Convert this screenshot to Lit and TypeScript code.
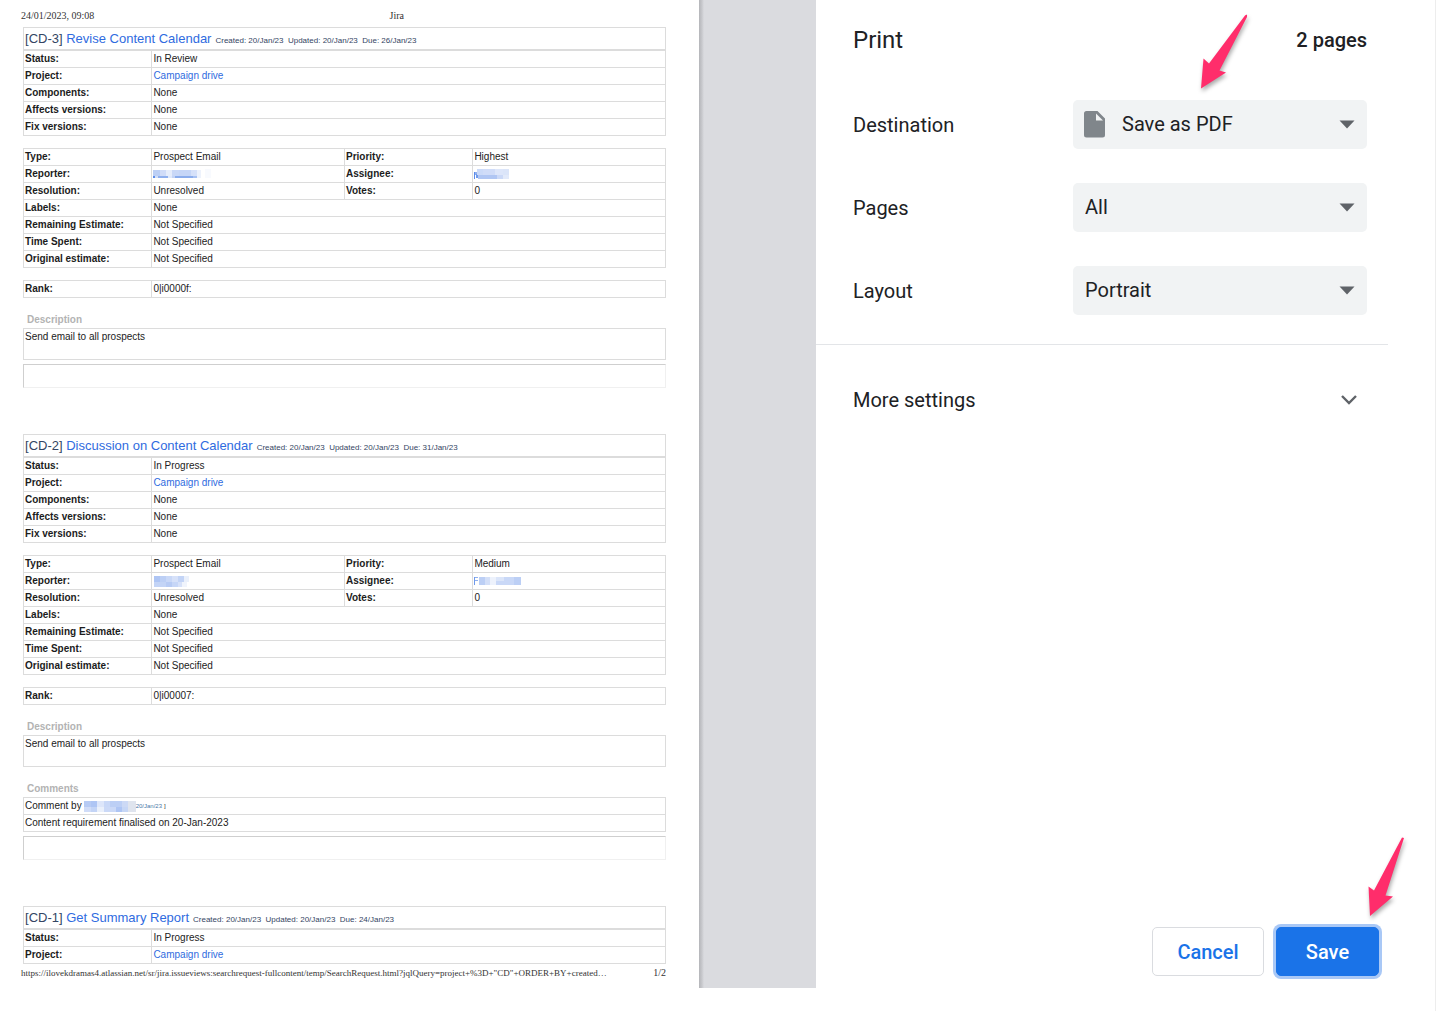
import { LitElement, html, css, svg, nothing } from "lit";
import { customElement } from "lit/decorators.js";

type Block = [x: number, y: number, w: number, h: number, fill: string];

interface Mask {
  label: string;
  width: number;
  blocks: Block[];
}

interface Issue {
  key: string;
  title: string;
  due: string;
  status: string;
  type?: string;
  priority?: string;
  reporter?: Mask;
  assignee?: Mask;
  rank?: string;
  description?: string;
  comment?: { author: Mask; date: string; text: string };
}

const issues: Issue[] = [
  {
    key: "CD-3",
    title: "Revise Content Calendar",
    due: "26/Jan/23",
    status: "In Review",
    type: "Prospect Email",
    priority: "Highest",
    reporter: {
      label: "Reporter",
      width: 58,
      blocks: [
        [0, 1, 7, 6, "#bccff5"], [7, 1, 6, 6, "#d0dcf8"], [13, 1, 6, 6, "#e6edfb"], [19, 1, 7, 6, "#c9d8f7"],
        [26, 1, 12, 6, "#c6d6f7"], [38, 1, 6, 6, "#d6e1f9"], [44, 1, 4, 8, "#edf2fc"], [52, 0, 6, 9, "#f8fafe"],
        [0, 7, 2, 2, "#5c8cea"], [2, 7, 3, 2, "#d3dff7"], [5, 7, 10, 2, "#8fb0ee"], [15, 7, 4, 2, "#e0e9fa"],
        [19, 7, 3, 2, "#c3d4f6"], [22, 7, 18, 2, "#8badec"], [40, 7, 4, 2, "#a8c2f2"],
      ],
    },
    assignee: {
      label: "Assignee",
      width: 36,
      blocks: [
        [0, 3, 1, 7, "#5c8cea"], [1, 3, 2, 3, "#8fb0ee"], [2, 5, 2, 4, "#6f9aec"],
        [3, 0, 6, 6, "#cbdaf8"], [9, 0, 12, 6, "#d0dcf8"], [21, 0, 8, 6, "#dde6fa"], [29, 0, 6, 6, "#dbe5f9"],
        [4, 6, 19, 4, "#b0c6f3"], [23, 6, 6, 4, "#cbd9f7"], [29, 6, 6, 4, "#e2eafa"],
      ],
    },
    rank: "0|i0000f:",
    description: "Send email to all prospects",
  },
  {
    key: "CD-2",
    title: "Discussion on Content Calendar",
    due: "31/Jan/23",
    status: "In Progress",
    type: "Prospect Email",
    priority: "Medium",
    reporter: {
      label: "Reporter",
      width: 36,
      blocks: [
        [1, 0, 6, 6, "#aec5f4"], [7, 0, 6, 6, "#bccff5"], [13, 0, 6, 6, "#c9d8f7"], [19, 0, 6, 6, "#d6e1f9"], [25, 0, 6, 6, "#c3d4f6"], [31, 0, 5, 6, "#eaf0fb"],
        [1, 6, 12, 5, "#c3d4f6"], [13, 6, 6, 5, "#b7cbf4"], [19, 6, 6, 5, "#c6d6f7"], [25, 6, 4, 5, "#d6e1f9"], [29, 6, 5, 5, "#f0f4fc"],
      ],
    },
    assignee: {
      label: "Assignee",
      width: 48,
      blocks: [
        [0, 1, 1, 8, "#6f9aec"], [1, 1, 3, 1, "#8fb0ee"], [1, 4, 3, 1, "#8fb0ee"],
        [5, 1, 6, 8, "#bccff5"], [11, 1, 5, 8, "#d3dff8"], [16, 1, 6, 8, "#edf2fc"], [22, 1, 8, 4, "#dbe5f9"],
        [22, 5, 8, 4, "#c9d8f7"], [30, 1, 10, 8, "#c9d8f7"], [40, 1, 7, 8, "#bccff5"],
      ],
    },
    rank: "0|i00007:",
    description: "Send email to all prospects",
    comment: {
      author: {
        label: "Author",
        width: 52,
        blocks: [
          [0, 0, 7, 6, "#b7cbf4"], [7, 0, 6, 6, "#aec5f4"], [13, 0, 7, 6, "#dde6fa"], [20, 0, 6, 6, "#c9d8f7"],
          [26, 0, 12, 6, "#bccff5"], [38, 0, 6, 6, "#ccd9f5"], [44, 0, 8, 11, "#dfe4ee"],
          [0, 6, 7, 5, "#d0dcf8"], [7, 6, 6, 5, "#c3d4f6"], [13, 6, 7, 5, "#eaf0fb"], [20, 6, 12, 5, "#cbd9f7"],
          [32, 6, 6, 5, "#aec5f4"], [38, 6, 6, 5, "#c6d6f5"],
        ],
      },
      date: "20/Jan/23",
      text: "Content requirement finalised on 20-Jan-2023",
    },
  },
  { key: "CD-1", title: "Get Summary Report", due: "24/Jan/23", status: "In Progress" },
];

const mask = (m: Mask) => html`<svg class="mask" role="img" aria-label=${m.label} width=${m.width} height="11" viewBox="0 0 ${m.width} 11" shape-rendering="crispEdges">
  ${m.blocks.map(([x, y, w, h, fill]) => svg`<rect x=${x} y=${y} width=${w} height=${h} fill=${fill}></rect>`)}
</svg>`;

@customElement("jira-issue")
class JiraIssue extends LitElement {
  static properties = { issue: { attribute: false } };
  declare issue: Issue;

  static styles = css`
    :host {
      display: block;
      color: #222;
      font: 10px/12px "Liberation Sans", Arial, sans-serif;
    }
    table {
      width: 100%;
      border-collapse: collapse;
      table-layout: fixed;
      border: 1px solid #dcdcdc;
    }
    th, td {
      box-sizing: border-box;
      height: 17px;
      padding: 2px 1px;
      border: 1px solid #dcdcdc;
      text-align: left;
      vertical-align: middle;
    }
    th { width: 20%; color: #1c1c1c; }
    a { color: #2f6be0; text-decoration: none; }
    .heading {
      box-sizing: border-box;
      display: flex;
      align-items: baseline;
      gap: 4px;
      margin: 0;
      height: 23px;
      padding: 3px 1px;
      border: 1px solid #dcdcdc;
      font-size: 13px;
      line-height: 16px;
      font-weight: 400;
      color: #344563;
    }
    .dates { font-size: 8px; white-space: pre; }
    .block { margin-top: 12px; }
    .mask { display: block; }
    .label {
      margin: 15px 0 2px 4px;
      font-size: 10px;
      line-height: 13px;
      font-weight: 700;
      color: #b3b3b3;
    }
    .text { height: 31px; vertical-align: top; }
    .author { display: flex; align-items: center; }
    .author .mask { margin-left: 2px; }
    .stamp { font-size: 6px; color: #4a78a8; }
    .bracket { margin-left: 2px; font-size: 6px; }
    .end {
      height: 24px;
      margin-top: 4px;
      border: 1px solid #f0f0f0;
      border-top-color: #cfcfcf;
      border-left-color: #cfcfcf;
      box-sizing: border-box;
    }
  `;

  render() {
    const i = this.issue;
    return html`
      <h2 class="heading">
        <span>[${i.key}] <a href="#${i.key}">${i.title}</a></span>
        <span class="dates">Created: 20/Jan/23  Updated: 20/Jan/23  Due: ${i.due}</span>
      </h2>
      <table>
        <tr><th scope="row">Status:</th><td>${i.status}</td></tr>
        <tr><th scope="row">Project:</th><td><a href="#project">Campaign drive</a></td></tr>
        ${i.type
          ? ["Components:", "Affects versions:", "Fix versions:"].map(
              (name) => html`<tr><th scope="row">${name}</th><td>None</td></tr>`)
          : nothing}
      </table>
      ${i.type ? this.details(i) : nothing}
    `;
  }

  private details(i: Issue) {
    const rest = [
      ["Labels:", "None"],
      ["Remaining Estimate:", "Not Specified"],
      ["Time Spent:", "Not Specified"],
      ["Original estimate:", "Not Specified"],
    ];
    return html`
      <table class="block">
        <colgroup><col style="width:20%"><col style="width:30%"><col style="width:20%"><col style="width:30%"></colgroup>
        <tr><th scope="row">Type:</th><td>${i.type}</td><th scope="row">Priority:</th><td>${i.priority}</td></tr>
        <tr><th scope="row">Reporter:</th><td>${mask(i.reporter!)}</td><th scope="row">Assignee:</th><td>${mask(i.assignee!)}</td></tr>
        <tr><th scope="row">Resolution:</th><td>Unresolved</td><th scope="row">Votes:</th><td>0</td></tr>
        ${rest.map(([name, value]) => html`<tr><th scope="row">${name}</th><td colspan="3">${value}</td></tr>`)}
      </table>
      <table class="block"><tr><th scope="row">Rank:</th><td>${i.rank}</td></tr></table>
      <h3 class="label">Description</h3>
      <table><tr><td class="text">${i.description}</td></tr></table>
      ${i.comment
        ? html`<h3 class="label">Comments</h3>
            <table>
              <tr><td><div class="author">Comment by ${mask(i.comment.author)}<span class="stamp">${i.comment.date}</span><span class="bracket">]</span></div></td></tr>
              <tr><td>${i.comment.text}</td></tr>
            </table>`
        : nothing}
      <div class="end"></div>
    `;
  }
}

@customElement("app-root")
class AppRoot extends LitElement {
  static styles = css`
    :host {
      display: block;
      background: #fff;
      color: #202124;
      font-family: Roboto, "Liberation Sans", sans-serif;
    }
    .dialog {
      box-sizing: border-box;
      display: grid;
      grid-template-columns: minmax(0, 1fr) 117px 620px;
      min-height: 100vh;
    }
    .sheet { padding: 9px 33px 0 21px; min-width: 0; }
    .running {
      display: grid;
      grid-template-columns: 4fr 3fr;
      font: 10px/14px "Liberation Serif", "Times New Roman", serif;
      color: #333;
    }
    .foot {
      display: flex;
      justify-content: space-between;
      gap: 12px;
      margin-top: 2px;
    }
    .url {
      min-width: 0;
      overflow: hidden;
      font-size: 9px;
      white-space: nowrap;
    }
    .issues {
      display: flex;
      flex-direction: column;
      gap: 46px;
      margin: 4px 0 0 2px;
    }
    .gutter {
      margin-bottom: 23px;
      background: linear-gradient(90deg, #b4b5b9 0, #c8c9cd 3px, #dadbdf 5px);
    }
    .panel {
      position: relative;
      display: flex;
      flex-direction: column;
      border-right: 1px solid #ededed;
      font-size: 20px;
      line-height: 24px;
    }
    .top {
      display: flex;
      justify-content: space-between;
      align-items: center;
      padding: 26px 68px 32px 37px;
    }
    h1 { margin: 0; font-size: 24px; line-height: 28px; font-weight: 400; }
    .count { font-weight: 500; }
    .row {
      display: grid;
      grid-template-columns: minmax(0, 1fr) 294px;
      align-items: center;
      padding: 14px 68px 20px 37px;
    }
    .field { position: relative; display: flex; }
    select {
      appearance: none;
      width: 100%;
      height: 49px;
      padding: 0 48px 2px 12px;
      border: 0;
      border-radius: 5px;
      background: #f1f3f4;
      color: #202124;
      font: inherit;
    }
    .with-icon select { padding-left: 49px; }
    .file { position: absolute; left: 11px; top: 11px; }
    .caret { position: absolute; right: 12px; top: 20px; pointer-events: none; }
    .more {
      display: flex;
      justify-content: space-between;
      align-items: center;
      margin: 9px 47px 0 0;
      padding: 43px 31px 20px 37px;
      border: 0;
      border-top: 1px solid #e3e5e8;
      background: none;
      color: inherit;
      font: inherit;
      text-align: left;
    }
    .actions {
      display: flex;
      justify-content: flex-end;
      gap: 12px;
      margin-top: auto;
      padding: 0 56px 35px 0;
    }
    .btn {
      box-sizing: border-box;
      height: 49px;
      width: 112px;
      border: 1px solid #dadce0;
      border-radius: 5px;
      background: #fff;
      color: #1a73e8;
      font: inherit;
      font-weight: 500;
    }
    .primary {
      width: 103px;
      border-color: #1a73e8;
      background: #1a73e8;
      color: #fff;
      box-shadow: 0 0 0 3px #a9c8f6;
    }
    .arrow { position: absolute; overflow: visible; pointer-events: none; filter: drop-shadow(1px 3px 2px #0005); }
    .arrow-top { right: 188px; top: 14px; }
    .arrow-bottom { right: 31px; bottom: 94px; }
  `;

  private caret() {
    return html`<svg class="caret" width="16" height="9" viewBox="0 0 16 9" aria-hidden="true"><path d="M.5.5h15L8 8.5z" fill="#5f6368"></path></svg>`;
  }

  render() {
    return html`
      <div class="dialog">
        <article class="sheet">
          <header class="running"><span>24/01/2023, 09:08</span><span>Jira</span></header>
          <div class="issues">${issues.map((i) => html`<jira-issue .issue=${i}></jira-issue>`)}</div>
          <footer class="running foot">
            <span class="url">https://ilovekdramas4.atlassian.net/sr/jira.issueviews:searchrequest-fullcontent/temp/SearchRequest.html?jqlQuery=project+%3D+"CD"+ORDER+BY+created…</span>
            <span>1/2</span>
          </footer>
        </article>
        <div class="gutter"></div>
        <section class="panel">
          <div class="top"><h1>Print</h1><span class="count">2 pages</span></div>
          <div class="row">
            <label for="destination">Destination</label>
            <div class="field with-icon">
              <select id="destination"><option>Save as PDF</option></select>
              <svg class="file" width="21" height="27" viewBox="0 0 21 27" aria-hidden="true">
                <path d="M2.5 0H13.5L21 7.5V24a2.500 2.500 0 0 1-2.500 2.500H2.500A2.500 2.500 0 0 1 0 24V2.500A2.500 2.500 0 0 1 2.500 0Z" fill="#80868b"></path>
                <path d="M12 2.500V9.500H19Z" fill="#f1f3f4"></path>
              </svg>
              ${this.caret()}
            </div>
          </div>
          <div class="row">
            <label for="pages">Pages</label>
            <div class="field"><select id="pages"><option>All</option></select>${this.caret()}</div>
          </div>
          <div class="row">
            <label for="layout">Layout</label>
            <div class="field"><select id="layout"><option>Portrait</option></select>${this.caret()}</div>
          </div>
          <button class="more" type="button">
            <span>More settings</span>
            <svg width="16" height="10" viewBox="0 0 16 10" aria-hidden="true"><path d="M1 1l7 7 7-7" fill="none" stroke="#5f6368" stroke-width="2.4"></path></svg>
          </button>
          <div class="actions">
            <button class="btn" type="button">Cancel</button>
            <button class="btn primary" type="button">Save</button>
          </div>
          <svg class="arrow arrow-top" width="47" height="75" viewBox="0 0 47 75" aria-hidden="true">
            <path d="M46.5 .5Q47.5 1 47 3L19.500 56.500L26 58.500L1 74.500L3.500 44.500L9 49.500L45 1.500Z" fill="#ff2d6b"></path>
          </svg>
          <svg class="arrow arrow-bottom" width="36" height="80" viewBox="0 0 36 80" aria-hidden="true">
            <path d="M34 .5L36 1L17.500 58.500L25 59.500L2 79L.5 49.500L6 53.500Z" fill="#ff2d6b"></path>
          </svg>
        </section>
      </div>
    `;
  }
}
